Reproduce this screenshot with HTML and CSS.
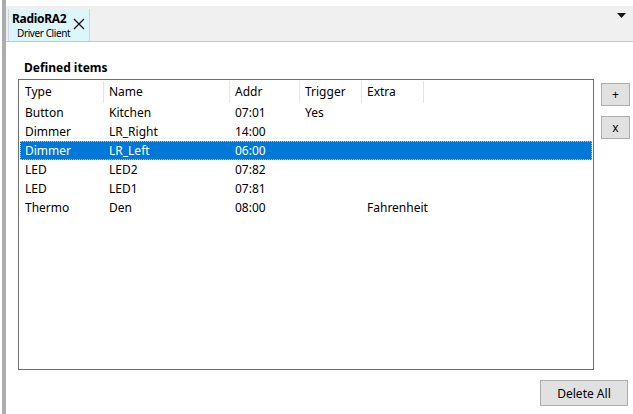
FILE: index.html
```html
<!DOCTYPE html>
<html>
<head>
<meta charset="utf-8">
<link rel="stylesheet" href="styles.css">
</head>
<body>
<div class="app">
  <div class="leftbar"></div>
  <div class="main">
    <div class="tabstrip">
      <div class="tab">
        <div class="tab-text">
          <div class="tab-title">RadioRA2</div>
          <div class="tab-sub">Driver Client</div>
        </div>
        <svg class="tab-close" width="12" height="12" viewBox="0 0 12 12"><path d="M1 1 L11 11 M11 1 L1 11" stroke="#111" stroke-width="1.3" fill="none"/></svg>
      </div>
      <div class="strip-fill"></div>
      <svg class="dropdown" width="9" height="5" viewBox="0 0 9 5"><path d="M0 0 H9 L4.5 5 Z" fill="#111"/></svg>
    </div>
    <div class="content">
      <div class="label">Defined items</div>
      <div class="listrow">
        <div class="listbox">
          <div class="row header">
            <div class="cell">Type</div><div class="cell">Name</div><div class="cell">Addr</div><div class="cell">Trigger</div><div class="cell">Extra</div><div class="cell last"></div>
          </div>
          <div class="row"><div class="cell">Button</div><div class="cell">Kitchen</div><div class="cell">07:01</div><div class="cell">Yes</div><div class="cell"></div><div class="cell"></div></div>
          <div class="row"><div class="cell">Dimmer</div><div class="cell">LR_Right</div><div class="cell">14:00</div><div class="cell"></div><div class="cell"></div><div class="cell"></div></div>
          <div class="row selected"><div class="cell">Dimmer</div><div class="cell">LR_Left</div><div class="cell">06:00</div><div class="cell"></div><div class="cell"></div><div class="cell"></div></div>
          <div class="row"><div class="cell">LED</div><div class="cell">LED2</div><div class="cell">07:82</div><div class="cell"></div><div class="cell"></div><div class="cell"></div></div>
          <div class="row"><div class="cell">LED</div><div class="cell">LED1</div><div class="cell">07:81</div><div class="cell"></div><div class="cell"></div><div class="cell"></div></div>
          <div class="row"><div class="cell">Thermo</div><div class="cell">Den</div><div class="cell">08:00</div><div class="cell"></div><div class="cell">Fahrenheit</div><div class="cell"></div></div>
        </div>
        <div class="sidebtns">
          <button class="btn small">+</button>
          <button class="btn small">x</button>
        </div>
      </div>
      <div class="footer">
        <button class="btn wide">Delete All</button>
      </div>
    </div>
  </div>
</div>
</body>
</html>
```
FILE: styles.css
```css
* { box-sizing: border-box; }
html, body { margin: 0; padding: 0; background: #fff; }
body {
  font-family: "Noto Sans", "Liberation Sans", sans-serif;
  font-size: 12px;
  color: #000;
  width: 633px;
  height: 414px;
  overflow: hidden;
}
.app { display: flex; height: 414px; }
.leftbar { width: 4px; margin-left: 2px; background: #acacac; flex: none; }
.main { flex: 1; display: flex; flex-direction: column; min-width: 0; }

.tabstrip {
  margin-top: 6px;
  height: 36px;
  display: flex;
  align-items: stretch;
  background: #f0f0f0;
  border-bottom: 1px solid #c8c8c8;
  padding-left: 2px;
  position: relative;
}
.tab {
  margin-top: 3px;
  width: 82px;
  background: #dcf6fc;
  border-left: 1px solid #c8d8dc;
  border-right: 1px solid #c8d8dc;
  display: flex;
  align-items: center;
  padding-left: 3px;
  gap: 3px;
  white-space: nowrap;
}
.tab-text { display: flex; flex-direction: column; }
.tab-title { font-weight: bold; font-size: 12px; line-height: 15px; letter-spacing: -0.3px; }
.tab-sub { font-size: 10px; line-height: 14px; padding-left: 5px; letter-spacing: -0.4px; }
.tab-close { margin-top: -2px; flex: none; }
.strip-fill { flex: 1; }
.dropdown { position: absolute; right: 7px; top: 7px; }

.content { flex: 1; display: flex; flex-direction: column; padding-left: 12px; }
.label { font-weight: bold; margin-top: 18px; padding-left: 6px; line-height: 16px; }
.listrow { display: flex; gap: 7px; margin-top: 3px; }
.listbox {
  width: 576px;
  height: 291px;
  border: 1px solid #6e6e6e;
  padding: 1px;
  background: #fff;
}
.row {
  display: grid;
  grid-template-columns: 84px 126px 70px 62px 62px 1fr;
  height: 19px;
  line-height: 19px;
  white-space: nowrap;
}
.row.header { height: 22px; line-height: 21px; }
.header .cell { border-right: 1px solid #e5e5e5; }
.header .cell.last { border-right: none; }
.cell { padding-left: 5px; overflow: visible; }
.row.selected {
  background: #0078d7;
  color: #fff;
  outline: 1px dotted #9ccbf0;
  outline-offset: -1px;
}

.sidebtns { display: flex; flex-direction: column; gap: 10px; padding-top: 4px; }
.btn {
  font-family: inherit;
  font-size: 12px;
  background: #e1e1e1;
  border: 1px solid #adadad;
  color: #000;
  padding: 0;
  margin: 0;
  border-radius: 0;
}
.btn.small { width: 29px; height: 23px; line-height: 20px; }
.footer { display: flex; justify-content: flex-end; padding-right: 5px; margin-top: 10px; }
.btn.wide { width: 88px; height: 26px; }
```
